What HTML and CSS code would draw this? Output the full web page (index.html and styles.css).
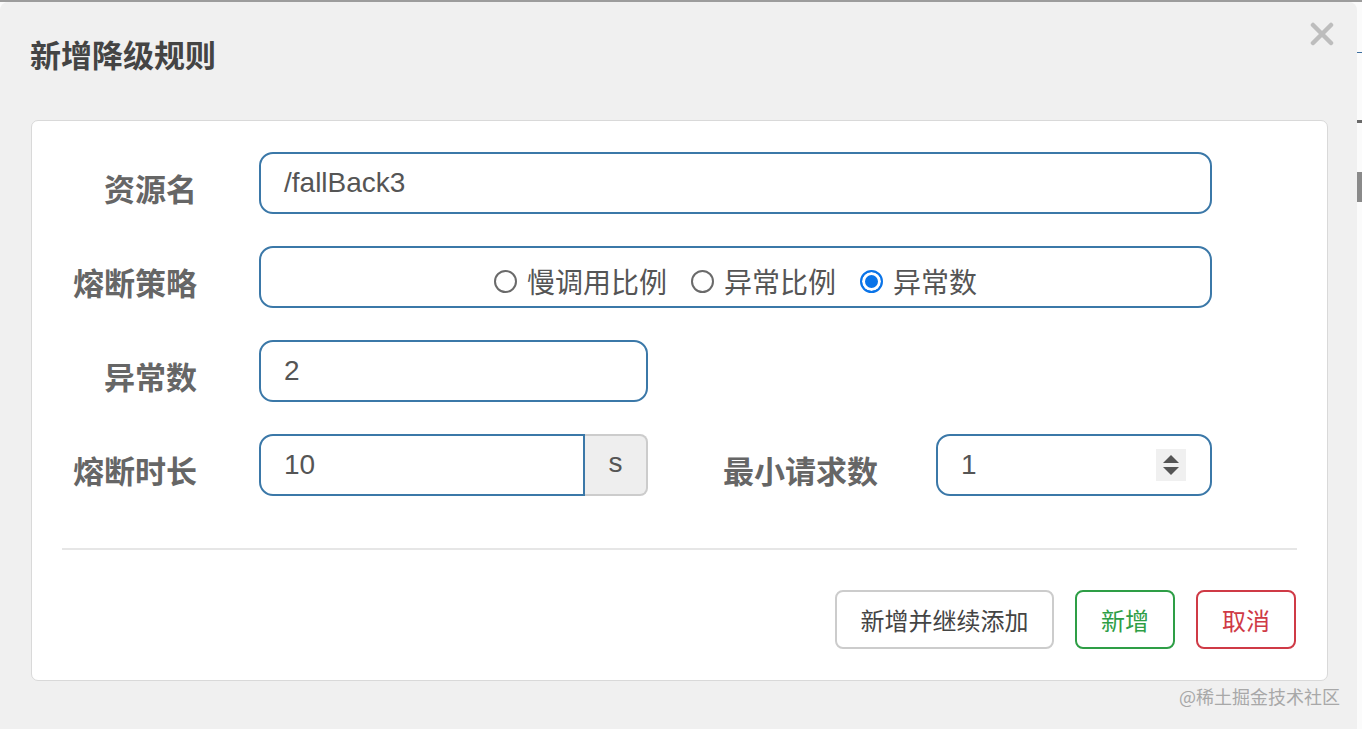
FILE: index.html
```html
<!DOCTYPE html>
<html lang="zh-CN">
<head>
<meta charset="utf-8">
<title>新增降级规则</title>
<link rel="stylesheet" href="styles.css">
</head>
<body>
<div class="page">
  <div class="modal">
    <div class="modal-header">
      <h3 class="modal-title">新增降级规则</h3>
      <button class="close" aria-label="关闭">
        <svg width="24" height="24" viewBox="0 0 24 24"><path d="M3 3 L21 21 M21 3 L3 21" stroke="#bdbdbd" stroke-width="4.5" stroke-linecap="round"/></svg>
      </button>
    </div>
    <div class="card">
      <div class="form-row">
        <label class="label">资源名</label>
        <div class="control wide"><span class="val">/fallBack3</span></div>
      </div>
      <div class="form-row">
        <label class="label">熔断策略</label>
        <div class="control wide radios">
          <span class="radio"><span class="dot"></span>慢调用比例</span>
          <span class="radio"><span class="dot"></span>异常比例</span>
          <span class="radio"><span class="dot on"></span>异常数</span>
        </div>
      </div>
      <div class="form-row">
        <label class="label">异常数</label>
        <div class="control half"><span class="val">2</span></div>
      </div>
      <div class="form-row">
        <label class="label">熔断时长</label>
        <div class="group">
          <div class="control grp-input"><span class="val">10</span></div>
          <div class="addon">s</div>
        </div>
        <label class="label label2">最小请求数</label>
        <div class="control num">
          <span class="val">1</span>
          <span class="spin"><span class="up"></span><span class="down"></span></span>
        </div>
      </div>
      <div class="divider"></div>
      <div class="actions">
        <button class="btn btn-default">新增并继续添加</button>
        <button class="btn btn-ok">新增</button>
        <button class="btn btn-cancel">取消</button>
      </div>
    </div>
    <div class="watermark">@稀土掘金技术社区</div>
  </div>
  <div class="side"></div>
</div>
</body>
</html>
```

FILE: styles.css
```css
* { box-sizing: border-box; }
html, body { margin: 0; padding: 0; }
body {
  width: 1362px;
  height: 729px;
  overflow: hidden;
  background: #fbfbfb;
  font-family: "Liberation Sans", "Noto Sans CJK SC", sans-serif;
  color: #555;
}
.page {
  display: flex;
  height: 729px;
  border-top: 2px solid #9c9c9c;
}
.modal {
  position: relative;
  width: 1357px;
  height: 727px;
  background: #f0f0f0;
  border-radius: 8px 8px 0 0;
  display: flex;
  flex-direction: column;
}
.side {
  flex: 1;
  background: linear-gradient(#fbfbfb 0 50px, #3d6fa0 50px 51px, #fbfbfb 51px 118px, #6a6a6a 118px 121px, #fbfbfb 121px 170px, #8a8a8a 170px 200px, #fbfbfb 200px);
}
.modal-header {
  height: 118px;
  display: flex;
  justify-content: space-between;
  align-items: flex-start;
  padding: 30px 23px 0 30px;
}
.modal-title {
  margin: 0;
  font-size: 31px;
  line-height: 44px;
  font-weight: 700;
  color: #444;
  font-family: "Noto Sans CJK SC", sans-serif;
}
.close {
  border: 0;
  background: none;
  padding: 0;
  margin-top: -10px;
  width: 24px;
  height: 24px;
}
.card {
  margin-left: 31px;
  width: 1297px;
  height: 561px;
  background: #fff;
  border: 1px solid #d9d9d9;
  border-radius: 7px;
  padding: 31px 0 0 0;
  display: flex;
  flex-direction: column;
}
.form-row {
  display: flex;
  align-items: center;
  height: 62px;
  margin-bottom: 32px;
}
.label {
  width: 165px;
  margin-right: 62px;
  text-align: right;
  font-family: "Noto Sans CJK SC", sans-serif;
  font-weight: 700;
  font-size: 31px;
  color: #666;
  padding-top: 8px;
  white-space: nowrap;
}
.label2 {
  width: 230px;
  margin-right: 58px;
}
.control {
  height: 62px;
  border: 2px solid #3b78a8;
  border-radius: 14px;
  background: #fff;
  display: flex;
  align-items: center;
  padding-left: 23px;
  font-size: 28px;
  color: #555;
}
.val { display: block; line-height: 1; }
.wide { width: 953px; }
.half { width: 389px; }
.radios {
  justify-content: center;
  padding-left: 0;
  padding-top: 8px;
  font-family: "Noto Sans CJK SC", sans-serif;
  font-size: 28px;
  gap: 24px;
}
.radio {
  display: flex;
  align-items: center;
  gap: 10px;
  color: #555;
}
.dot {
  width: 23px;
  height: 23px;
  border-radius: 50%;
  border: 2px solid #6a6a6a;
  background: #fff;
}
.dot.on {
  border: 2px solid #0a74e8;
  background: #0a74e8;
  box-shadow: inset 0 0 0 3px #fff;
}
.group {
  display: flex;
  width: 389px;
  height: 62px;
}
.grp-input {
  width: 326px;
  border-radius: 14px 0 0 14px;
}
.addon {
  flex: 1;
  background: #eee;
  border: 2px solid #ccc;
  border-left: 0;
  border-radius: 0 8px 8px 0;
  display: flex;
  align-items: center;
  justify-content: center;
  font-size: 28px;
  color: #555;
  padding-bottom: 4px;
}
.num {
  width: 276px;
  justify-content: space-between;
  padding-right: 24px;
}
.spin {
  width: 30px;
  height: 32px;
  background: #f0f0f0;
  display: flex;
  flex-direction: column;
  align-items: center;
  justify-content: center;
  gap: 4px;
}
.up, .down {
  width: 0;
  height: 0;
  border-left: 8px solid transparent;
  border-right: 8px solid transparent;
}
.up { border-bottom: 8px solid #555; }
.down { border-top: 8px solid #555; }
.divider {
  margin: 20px 30px 0 30px;
  height: 2px;
  background: #e6e6e6;
}
.actions {
  display: flex;
  justify-content: flex-end;
  gap: 21px;
  padding-right: 31px;
  margin-top: 40px;
}
.btn {
  height: 59px;
  border-radius: 8px;
  background: #fff;
  font-family: "Noto Sans CJK SC", sans-serif;
  font-size: 24px;
  padding: 0 23px;
  cursor: pointer;
}
.btn-default { border: 2px solid #cccccc; color: #444; width: 219px; }
.btn-ok { border: 2px solid #2e9e46; color: #2e9e46; width: 100px; }
.btn-cancel { border: 2px solid #cf3a46; color: #cf3a46; width: 100px; }
.watermark {
  position: absolute;
  right: 17px;
  bottom: 20px;
  font-family: "Noto Sans CJK SC", sans-serif;
  font-size: 18px;
  color: #a8a8a8;
}
```
